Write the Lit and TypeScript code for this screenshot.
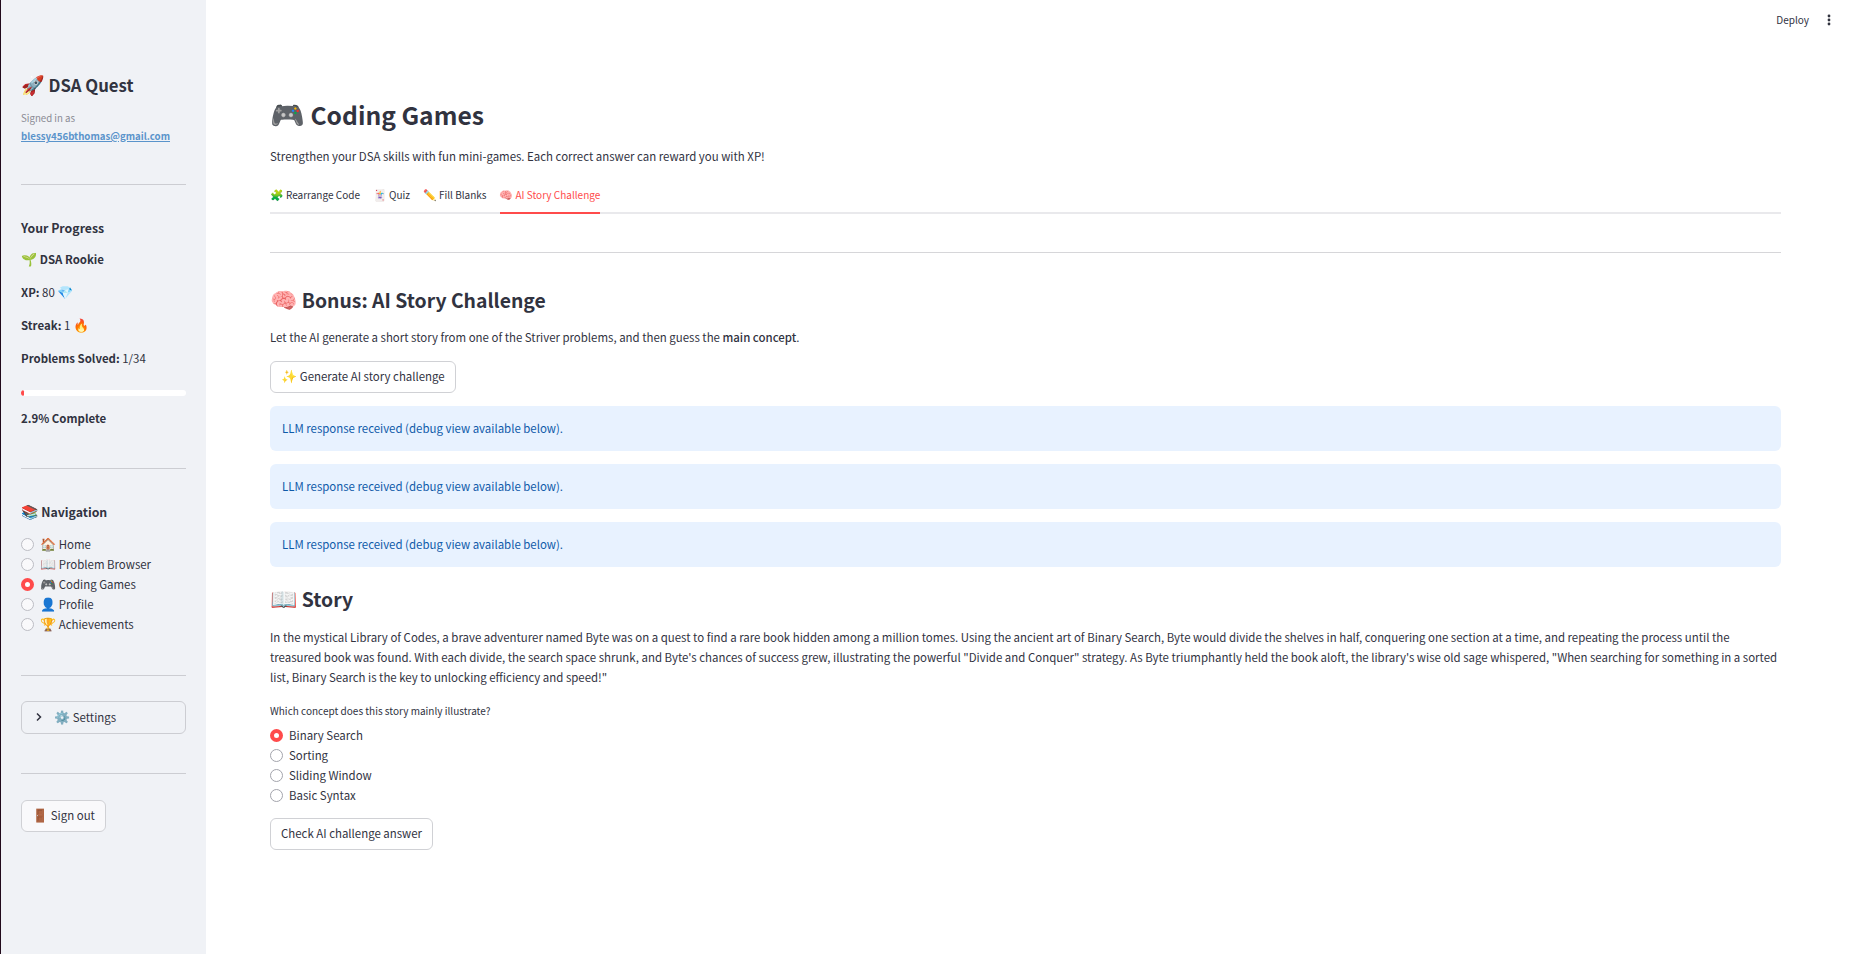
import { LitElement, html, css } from "lit";
import { customElement, state } from "lit/decorators.js";

const PAGES = [
  ["🏠", "Home"],
  ["📖", "Problem Browser"],
  ["🎮", "Coding Games"],
  ["👤", "Profile"],
  ["🏆", "Achievements"],
];
const TABS = [
  ["🧩", "Rearrange Code"],
  ["🃏", "Quiz"],
  ["✏️", "Fill Blanks"],
  ["🧠", "AI Story Challenge"],
];
const ANSWERS = ["Binary Search", "Sorting", "Sliding Window", "Basic Syntax"];
const NOTICES = Array(3).fill("LLM response received (debug view available below).");
const SOLVED = 1;
const TOTAL = 34;

const emoji = (glyph: string) => html`<span class="emoji">${glyph}</span>`;

@customElement("app-root")
export class AppRoot extends LitElement {
  @state() page = 2;
  @state() tab = 3;
  @state() answer = 0;

  static styles = css`
    :host {
      display: flex;
      box-sizing: border-box;
      min-height: 100vh;
      border-left: 1px solid #210a1b;
      background: #fff;
      color: #31333f;
      font: 400 13px/20px "Source Sans Pro", "Noto Sans CJK SC", "Noto Color Emoji", sans-serif;
      /* keeps the x-height of Source Sans whichever family is found */
      font-size-adjust: 0.478;
    }
    * { box-sizing: border-box; }
    h1, h2, h3, p, fieldset, legend { margin: 0; padding: 0; border: 0; }
    h1, h2, h3 { font-weight: 600; }
    b { font-weight: 600; }
    strong { font-weight: 500; }
    hr { width: 100%; height: 1px; margin: 0; border: 0; background: #cccdd2; }
    .emoji { font-family: "Noto Color Emoji", sans-serif; font-size-adjust: none; line-height: 0; }

    .sidebar {
      flex: 0 0 205px;
      padding: 72px 20px 40px;
      background: #f0f2f6;
    }
    .brand { font-size: 19px; line-height: 26px; }
    .account { margin-top: 11px; font-size: 11px; line-height: 18px; color: #8b8c95; }
    .account a { color: #5a94cb; font-weight: 600; text-decoration: underline; }
    .section { margin-top: 33px; font-size: 14px; line-height: 20px; }
    .sidebar hr { margin-top: 39px; }
    .stats { display: grid; gap: 13px; margin-top: 11px; }
    .bar {
      display: block;
      height: 6px;
      margin-top: 22px;
      border-radius: 3px;
      background: #fff;
      overflow: hidden;
    }
    .fill { height: 100%; border-radius: 3px; background: #ff4b4b; }
    .percent { margin-top: 12px; font-weight: 600; }
    .sidebar .percent + hr { margin-top: 40px; }

    .options { display: grid; justify-items: start; }
    .option { display: flex; align-items: center; height: 20px; gap: 6px; cursor: pointer; }
    .option input {
      appearance: none;
      width: 13px;
      height: 13px;
      margin: 0;
      border: 1px solid #a3a4ac;
      border-radius: 50%;
      background: #fff;
    }
    .nav input { border-color: #bcbdc4; background: #f9f9fb; }
    .option input:checked { border: 4px solid #ff4b4b; background: #fff; }
    .nav { margin-top: 12px; }
    .sidebar .nav + hr { margin-top: 41px; }

    .settings {
      margin-top: 25px;
      border: 1px solid #cccdd2;
      border-radius: 6px;
    }
    .settings summary {
      display: flex;
      align-items: center;
      gap: 10px;
      height: 31px;
      padding: 0 12px 2px;
      list-style: none;
      cursor: pointer;
    }
    .btn {
      display: block;
      height: 32px;
      padding: 0 10px 2px;
      border: 1px solid #d0d1d5;
      border-radius: 6px;
      background: #fff;
      color: inherit;
      font: inherit;
      font-size-adjust: inherit;
      cursor: pointer;
    }
    .signout { margin-top: 26px; background: #f9f9fb; }

    .main { flex: 1; min-width: 0; }
    .toolbar {
      display: flex;
      justify-content: flex-end;
      align-items: center;
      gap: 12px;
      height: 40px;
      padding-right: 13px;
    }
    .plain, .tab, .question { font: inherit; font-size: 11px; font-size-adjust: 0.495; }
    .plain {
      padding: 0;
      border: 0;
      background: none;
      color: inherit;
      cursor: pointer;
    }
    .plain svg { display: block; }
    .content { padding: 49px 69px 80px 64px; }
    .title { font-size: 28px; line-height: 50px; }
    .lead { margin-top: 7px; }
    .tabs { display: flex; gap: 13px; margin-top: 13px; border-bottom: 2px solid #e9e9ec; }
    .tab {
      height: 35px;
      margin-bottom: -2px;
      padding: 0 0 2px;
      border: 0;
      border-bottom: 2px solid transparent;
      background: none;
      color: inherit;
      cursor: pointer;
    }
    .tab.active { border-color: #ff4b4b; color: #ff4b4b; }
    .content hr { margin-top: 38px; background: #d6d6d9; }
    .heading { font-size: 22px; line-height: 32px; }
    .bonus { margin-top: 31px; }
    .intro { margin: 11px 0 14px; }
    .notice {
      margin-top: 13px;
      padding: 12px;
      border-radius: 6px;
      background: #e8f2ff;
      color: #0f5aa9;
      line-height: 21px;
    }
    .story-title { margin-top: 16px; }
    .story { margin-top: 12px; }
    fieldset { margin-top: 15px; }
    .question { line-height: 18px; }
    .answers { margin-top: 5px; }
    .check { margin-top: 13px; }
  `;

  private option(group: string, label: unknown, checked: boolean, pick: () => void) {
    return html`<label class="option">
      <input type="radio" name=${group} .checked=${checked} @change=${pick} />
      <span>${label}</span>
    </label>`;
  }

  render() {
    const share = (SOLVED / TOTAL) * 100;
    return html`
      <aside class="sidebar">
        <h1 class="brand">${emoji("🚀")} DSA Quest</h1>
        <div class="account">
          Signed in as<br /><a href="mailto:blessy456bthomas@gmail.com">blessy456bthomas@gmail.com</a>
        </div>
        <hr />
        <h3 class="section">Your Progress</h3>
        <div class="stats">
          <p>${emoji("🌱")} <b>DSA Rookie</b></p>
          <p><b>XP:</b> 80 ${emoji("💎")}</p>
          <p><b>Streak:</b> 1 ${emoji("🔥")}</p>
          <p><b>Problems Solved:</b> ${SOLVED}/${TOTAL}</p>
        </div>
        <div class="bar" role="progressbar" aria-label="Problems solved" aria-valuenow=${Math.floor(share)}>
          <div class="fill" style="width:${Math.floor(share)}%"></div>
        </div>
        <p class="percent">${share.toFixed(1)}% Complete</p>
        <hr />
        <h3 class="section">${emoji("📚")} Navigation</h3>
        <nav class="options nav">
          ${PAGES.map(([icon, name], i) =>
            this.option("page", html`${emoji(icon)} ${name}`, this.page === i, () => (this.page = i)))}
        </nav>
        <hr />
        <details class="settings">
          <summary>
            <svg width="10" height="10" viewBox="0 0 10 10" fill="none" stroke="#31333f" stroke-width="1.5">
              <path d="M3 1.5 6.5 5 3 8.5" />
            </svg>
            <span>${emoji("⚙️")} Settings</span>
          </summary>
        </details>
        <hr />
        <button class="btn signout">${emoji("🚪")} Sign out</button>
      </aside>
      <main class="main">
        <header class="toolbar">
          <button class="plain">Deploy</button>
          <button class="plain" aria-label="Main menu">
            <svg width="16" height="16" viewBox="0 0 16 16" fill="#31333f">
              <circle cx="8" cy="4" r="1.4" /><circle cx="8" cy="8" r="1.4" /><circle cx="8" cy="12" r="1.4" />
            </svg>
          </button>
        </header>
        <div class="content">
          <h1 class="title">${emoji("🎮")} Coding Games</h1>
          <p class="lead">Strengthen your DSA skills with fun mini-games. Each correct answer can reward you with XP!</p>
          <div class="tabs" role="tablist">
            ${TABS.map(([icon, name], i) => html`<button
              class="tab ${this.tab === i ? "active" : ""}"
              role="tab"
              aria-selected=${this.tab === i}
              @click=${() => (this.tab = i)}
            >${emoji(icon)} ${name}</button>`)}
          </div>
          <hr />
          <h2 class="heading bonus">${emoji("🧠")} Bonus: AI Story Challenge</h2>
          <p class="intro">
            Let the AI generate a short story from one of the Striver problems, and then guess the
            <strong>main concept</strong>.
          </p>
          <button class="btn">${emoji("✨")} Generate AI story challenge</button>
          ${NOTICES.map((text) => html`<div class="notice" role="status">${text}</div>`)}
          <h2 class="heading story-title">${emoji("📖")} Story</h2>
          <p class="story">
            In the mystical Library of Codes, a brave adventurer named Byte was on a quest to find a rare book hidden
            among a million tomes. Using the ancient art of Binary Search, Byte would divide the shelves in half,
            conquering one section at a time, and repeating the process until the treasured book was found. With each
            divide, the search space shrunk, and Byte's chances of success grew, illustrating the powerful "Divide and
            Conquer" strategy. As Byte triumphantly held the book aloft, the library's wise old sage whispered, "When
            searching for something in a sorted list, Binary Search is the key to unlocking efficiency and speed!"
          </p>
          <fieldset>
            <legend class="question">Which concept does this story mainly illustrate?</legend>
            <div class="options answers">
              ${ANSWERS.map((name, i) =>
                this.option("answer", name, this.answer === i, () => (this.answer = i)))}
            </div>
          </fieldset>
          <button class="btn check">Check AI challenge answer</button>
        </div>
      </main>
    `;
  }
}
